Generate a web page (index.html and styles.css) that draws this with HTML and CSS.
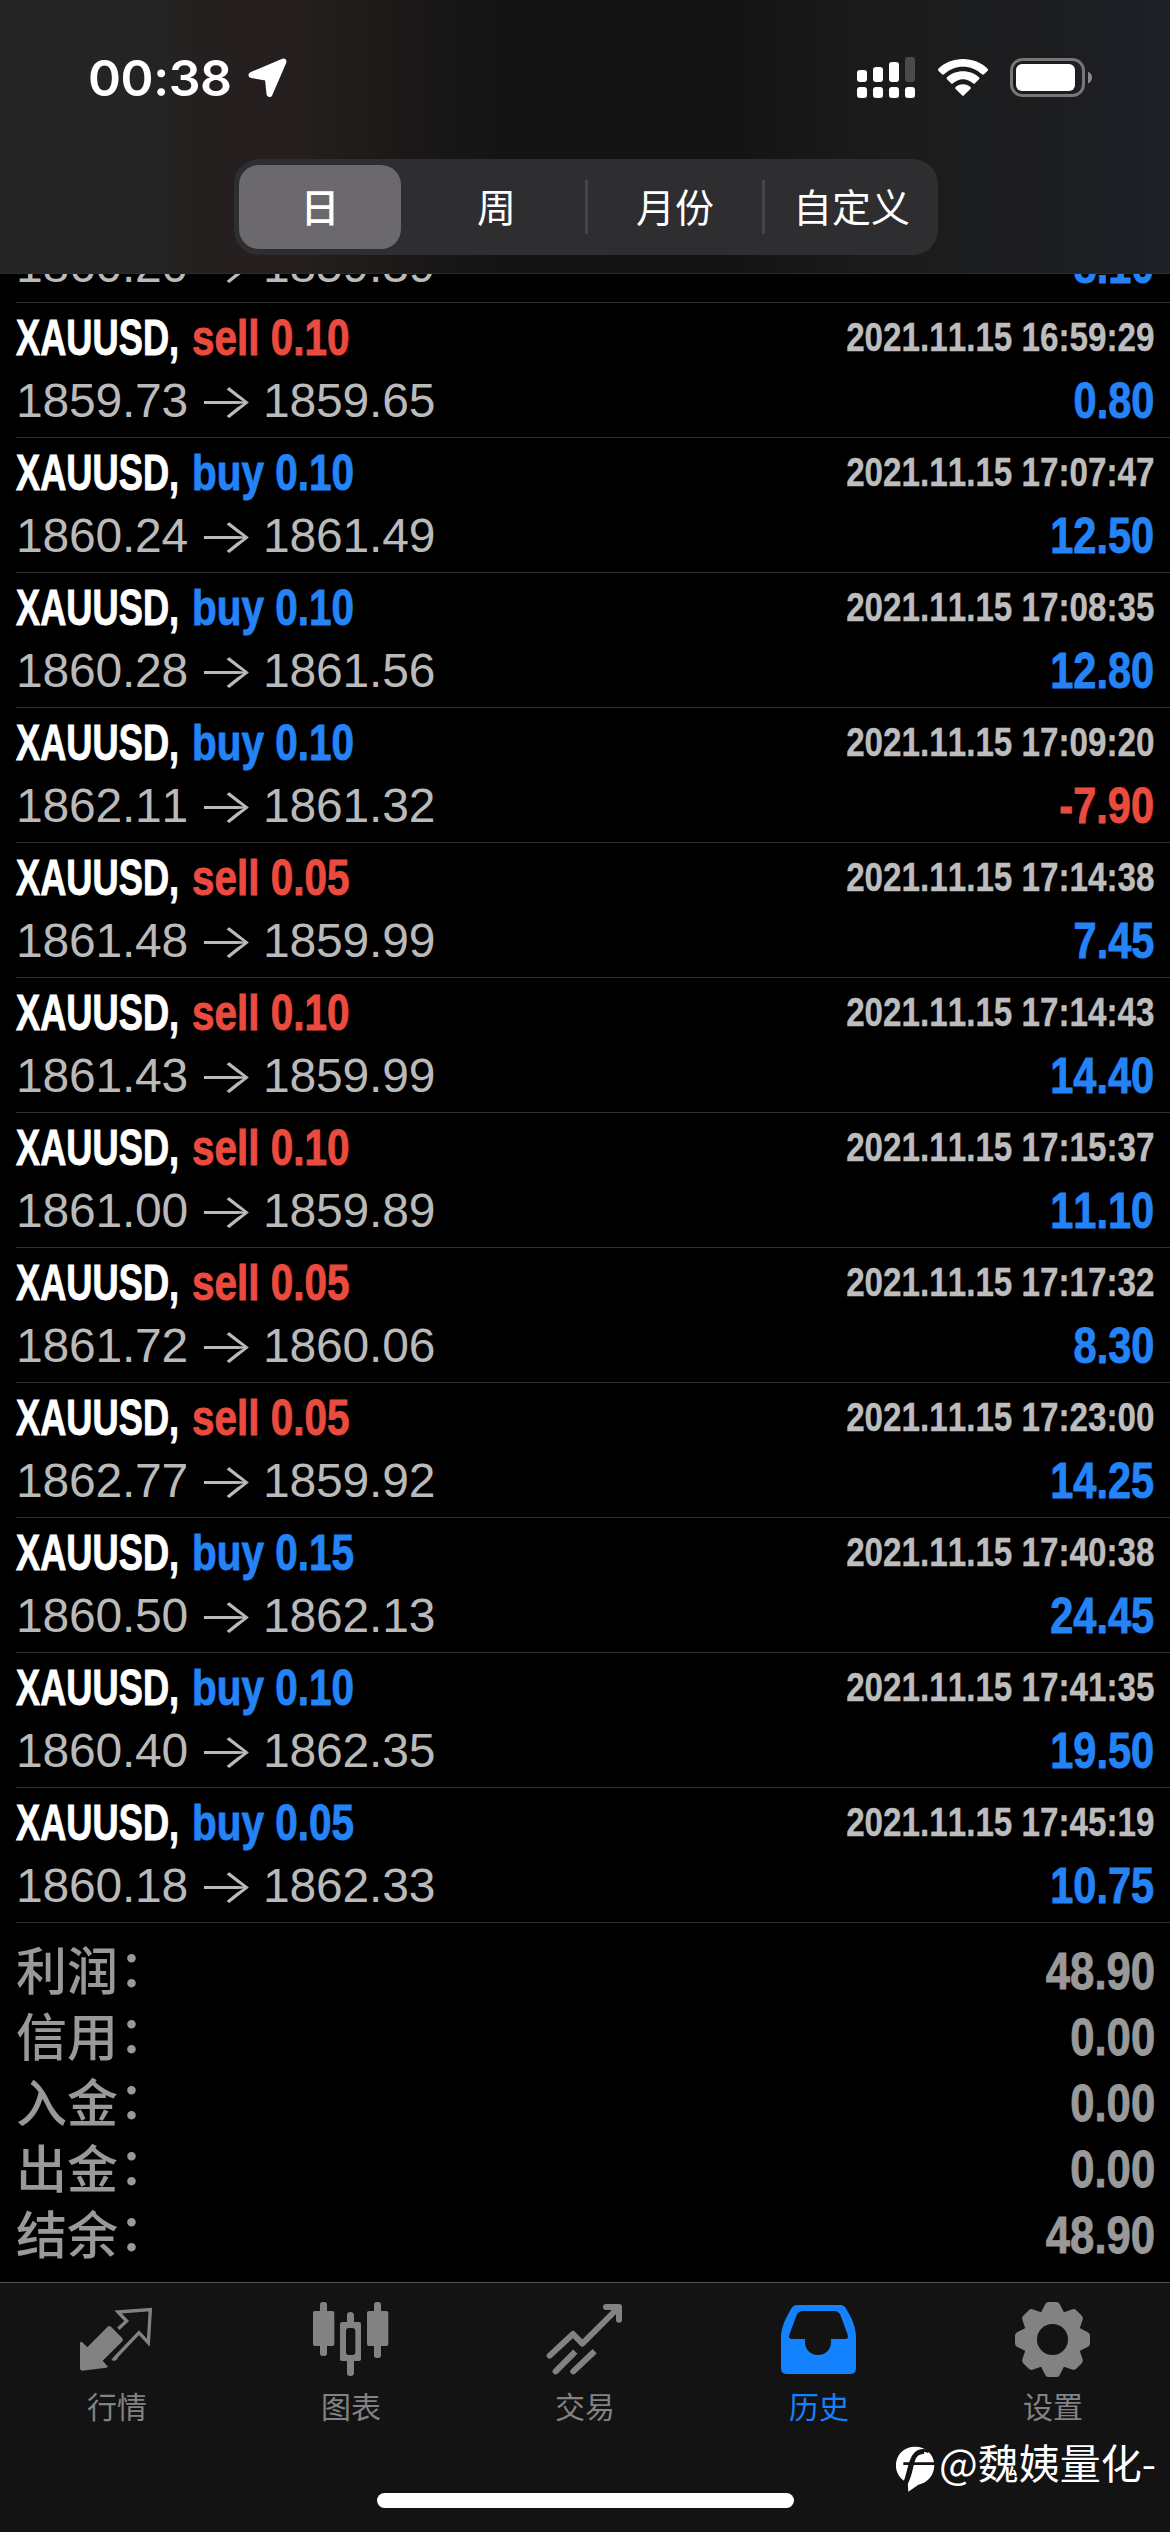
FILE: index.html
```html
<!DOCTYPE html>
<html lang="zh-CN">
<head>
<meta charset="utf-8">
<title>历史</title>
<link rel="stylesheet" href="styles.css">
</head>
<body>
<div class="screen">
  <header class="header">
    <div class="status">
      <div class="status-left">
        <span class="clock">00:38</span>
        <svg class="location" width="40" height="40" viewBox="0 0 40 40"><path d="M3.500 17 35.500 3.500 21.500 36 20 21 18 19.500Z" fill="#fff" stroke="#fff" stroke-width="6" stroke-linejoin="round"/></svg>
      </div>
      <div class="status-right">
        <svg width="58" height="41" viewBox="0 0 58 41" fill="#fff">
          <rect x="0" y="13" width="10" height="12" rx="3"/><rect x="16" y="10" width="10" height="15" rx="3"/><rect x="32" y="5" width="10" height="20" rx="3"/><rect x="48" y="0" width="10" height="25" rx="3" fill="#4a4a4a"/>
          <rect x="0" y="30" width="10" height="11" rx="3"/><rect x="16" y="30" width="10" height="11" rx="3"/><rect x="32" y="30" width="10" height="11" rx="3"/><rect x="48" y="30" width="10" height="11" rx="3"/>
        </svg>
        <svg class="wifi" width="50" height="37" viewBox="0 0 150 111" fill="#fff">
          <path d="M75 0C104 0 130 11 149 29Q151 32 149 35L138 46Q135 48 132 46C116 31 96 23 75 23S34 31 18 46Q15 48 12 46L1 35Q-1 32 1 29C20 11 46 0 75 0Z"/>
          <path d="M75 37C94 37 111 44 123 55Q126 58 123 61L111 73Q108 76 105 73C97 66 87 61 75 61S53 66 45 73Q42 76 39 73L27 61Q24 58 27 55C39 44 56 37 75 37Z"/>
          <path d="M75 76C84 76 91 79 97 84Q100 87 97 90L78 109Q75 112 72 109L53 90Q50 87 53 84C59 79 66 76 75 76Z"/>
        </svg>
        <svg class="battery" width="82" height="39" viewBox="0 0 82 39"><rect x="1.500" y="1.500" width="72" height="36" rx="11" fill="none" stroke="#777" stroke-width="3"/><rect x="6" y="6" width="59" height="27" rx="6" fill="#fff"/><path d="M78 13.500Q82 15.500 82 19.500T78 25.500Z" fill="#8a8a8a"/></svg>
      </div>
    </div>
    <nav class="segments">
      <span class="segment active">日</span>
      <span class="segment">周</span>
      <span class="segment divided">月份</span>
      <span class="segment divided">自定义</span>
    </nav>
  </header>
  <main class="history" id="history"></main>
  <section class="summary">
    <div class="total"><span class="label">利润<span class="colon">：</span></span><b>48.90</b></div>
    <div class="total"><span class="label">信用<span class="colon">：</span></span><b>0.00</b></div>
    <div class="total"><span class="label">入金<span class="colon">：</span></span><b>0.00</b></div>
    <div class="total"><span class="label">出金<span class="colon">：</span></span><b>0.00</b></div>
    <div class="total"><span class="label">结余<span class="colon">：</span></span><b>48.90</b></div>
  </section>
  <footer class="footer">
    <nav class="tabs">
      <div class="tab">
        <svg viewBox="54 90 234 234"><path d="M60 217 66 216 82 232 143 170Q148 166 153 170L187 205Q191 210 187 214L128 272 144 290 139 293 66 302 60 298Z" fill="currentColor"/><path d="M175 176 200 153 174 126 271 119 265 218 237 188 162 267" fill="none" stroke="currentColor" stroke-width="10"/><path d="M154 265H175L165 272H158Z" fill="currentColor"/></svg>
        <span>行情</span>
      </div>
      <div class="tab">
        <svg viewBox="756 90 234 234" fill="currentColor"><rect x="759" y="123" width="64" height="105" rx="6"/><rect x="780" y="96" width="21" height="162" rx="8"/><rect x="921" y="123" width="64" height="105" rx="6"/><rect x="942" y="96" width="21" height="168" rx="8"/><path fill-rule="evenodd" d="M861 156V136Q861 126 871 126T882 136V156H897Q903 156 903 162V267Q903 273 897 273H882V309Q882 318 871 318T861 309V273H846Q840 273 840 267V162Q840 156 846 156ZM866 174Q858 174 858 183V246Q858 255 866 255H877Q886 255 886 246V183Q886 174 877 174Z"/></svg>
        <span>图表</span>
      </div>
      <div class="tab">
        <svg viewBox="78 90 234 234" fill="none" stroke="currentColor" stroke-width="18" stroke-linecap="round" stroke-linejoin="round"><path d="M89 257 159 192 187 221 294 114M258 111H297V149"/><path d="M107 304 154 257M160 304 212 255"/><path d="M154 257 166 245M212 255 224 244" stroke-linecap="butt"/></svg>
        <span>交易</span>
      </div>
      <div class="tab active">
        <svg viewBox="780 90 234 234" fill="currentColor"><path fill-rule="evenodd" d="M832 105H961Q972 105 977 114C996 144 1008 172 1008 204V295Q1008 312 992 312H799Q783 312 783 295V204C783 172 797 144 815 114Q821 105 832 105ZM849 123Q835 123 829 137L808 194Q804 207 816 207H855V216C855 241 873 255 894 255S933 241 933 216V207H975Q987 207 983 194L962 137Q956 123 943 123Z"/></svg>
        <span>历史</span>
      </div>
      <div class="tab">
        <svg viewBox="0 0 78 78"><g transform="translate(38.500 39.500)" fill="currentColor"><g id="teeth"><path d="M-12-26-7.500-35Q-6.500-37.500-4-37.500H4Q6.500-37.500 7.500-35L12-26V26L7.500 35Q6.500 37.500 4 37.500H-4Q-6.500 37.500-7.500 35L-12 26Z"/></g><use href="#teeth" transform="rotate(45)"/><use href="#teeth" transform="rotate(90)"/><use href="#teeth" transform="rotate(135)"/><circle r="29"/><circle r="15.500" fill="#131313"/></g></svg>
        <span>设置</span>
      </div>
    </nav>
    <div class="home-bar"></div>
  </footer>
  <div class="watermark">
    <svg width="39" height="46" viewBox="0 0 117 138"><path d="M58 2A56 56 0 0 1 115 57C115 88 93 112 67 116L37 137 35 110A56 56 0 0 1 58 2Z" fill="#fff"/><path d="M24 112C37 95 38 32 65 17Q78 9 98 17M22 53H117" fill="none" stroke="#131313" stroke-width="8"/><path d="M28 115C42 91 44 65 51 43 57 24 66 19 84 17" fill="none" stroke="#131313" stroke-width="12"/></svg>
    <span>@魏姨量化-</span>
  </div>
</div>
<script src="history.js"></script>
</body>
</html>
```
FILE: styles.css
```css
* { box-sizing: border-box; }
body { margin: 0; background: #000; color: #fff; font-family: "Liberation Sans", "Noto Sans CJK SC", sans-serif; font-kerning: none; }
.screen { position: relative; width: 1170px; height: 2532px; overflow: hidden; display: flex; flex-direction: column; }
svg { display: block; flex: none; }

.header { height: 274px; flex: none; border-bottom: 1px solid #2b2b2b; background: linear-gradient(90deg, #252525 0, #242424 150px, #251f1f 210px, #241e1e 310px, #1b1918 400px, #141414 500px, #131313 720px, #1b1b1b 870px, #1c1d1f 1040px, #1c2028 1170px); }
.status { height: 159px; padding: 0 78px 0 88px; display: flex; justify-content: space-between; align-items: flex-start; }
.status-left { display: flex; padding-top: 48px; }
.clock { width: 160px; font: 600 50px/60px Inter, sans-serif; letter-spacing: -.4px; }
.location { margin-top: 10px; }
.status-right { display: flex; padding-top: 57px; }
.wifi { margin: 2px 22px 0 23px; }
.battery { margin-top: 1px; }

.segments { width: 704px; height: 96px; margin-left: 234px; border-radius: 25px; background: #2e2e31; display: grid; grid-template-columns: 174px 177px 177px 176px; }
.segment { display: flex; align-items: center; justify-content: center; padding-bottom: 4px; font: 400 39px/60px "Noto Sans CJK SC", sans-serif; }
.segment.active { margin: 6px 7px 6px 5px; border-radius: 20px; background: #6b696d; font-weight: 500; }
.divided { padding-left: 3px; background: linear-gradient(#464649, #464649) no-repeat left 21px / 3px 54px; }

.history { flex: none; }
.deal { height: 135px; margin-left: 16px; padding: 5px 16px 0 0; border-bottom: 1px solid #303030; display: flex; flex-direction: column; gap: 3px; }
.clipped { height: 29px; margin-left: 16px; overflow: hidden; display: flex; flex-direction: column; justify-content: flex-end; border-bottom: 1px solid #303030; }
.clipped .deal { flex: none; margin-left: 0; height: 134px; border: 0; }
.line { height: 60px; line-height: 60px; display: flex; justify-content: space-between; white-space: nowrap; }
.title { display: flex; font-size: 50px; font-weight: 700; -webkit-text-stroke: .9px; }
.symbol { width: 176px; transform: scaleX(.725); transform-origin: left; }
.side { transform: scaleX(.81); transform-origin: left; }
.date { font-size: 40px; font-weight: 700; color: #bdbdbd; line-height: 58px; transform: scaleX(.83); transform-origin: right; -webkit-text-stroke: .4px; }
.prices { display: flex; font-size: 48px; color: #bababa; letter-spacing: -.2px; }
.arrow { width: 75px; text-align: center; font: 300 48px/60px Inter, sans-serif; transform: scaleX(1.28); }
.profit { font-size: 50px; font-weight: 700; transform: scaleX(.83); transform-origin: right; -webkit-text-stroke: .9px; }
.buy, .gain { color: #2483f7; }
.sell, .loss { color: #eb4b3e; }

.summary { flex: none; padding: 15px 15px 0 16px; height: 359px; color: #999; }
.total { height: 66px; display: flex; justify-content: space-between; align-items: center; font: 500 51px/66px "Noto Sans CJK SC", sans-serif; }
.label { height: 66px; margin-top: -6px; }
.colon { display: inline-block; width: 24px; text-indent: -12px; height: 66px; vertical-align: top; line-height: 66px; font-family: "Noto Sans CJK TC", sans-serif; }
.total b { font: 700 52px/66px "Liberation Sans", sans-serif; transform: scaleX(.84); transform-origin: right; -webkit-text-stroke: .9px; }

.footer { height: 250px; flex: none; border-top: 1px solid #545454; background: #131313; }
.tabs { display: grid; grid-template-columns: repeat(5, 1fr); padding-top: 17px; height: 210px; align-items: start; }
.tab { display: flex; flex-direction: column; align-items: center; color: #828282; font: 400 30px/40px "Noto Sans CJK SC", sans-serif; }
.tab svg { width: 78px; height: 78px; margin-bottom: 7px; }
.tab.active { color: #1482fe; }
.home-bar { width: 417px; height: 15px; margin: 0 auto; border-radius: 8px; background: #fff; }

.watermark { position: absolute; left: 896px; top: 2431px; display: flex; gap: 4px; font: 400 41px/60px "Noto Sans CJK SC", sans-serif; white-space: nowrap; }
.watermark svg { margin-top: 15px; }
```
FILE: history.js
```js
const deals = [
  ['sell 0.10', '2021.11.15 16:59:29', '1859.73', '1859.65', '0.80'],
  ['buy 0.10', '2021.11.15 17:07:47', '1860.24', '1861.49', '12.50'],
  ['buy 0.10', '2021.11.15 17:08:35', '1860.28', '1861.56', '12.80'],
  ['buy 0.10', '2021.11.15 17:09:20', '1862.11', '1861.32', '-7.90'],
  ['sell 0.05', '2021.11.15 17:14:38', '1861.48', '1859.99', '7.45'],
  ['sell 0.10', '2021.11.15 17:14:43', '1861.43', '1859.99', '14.40'],
  ['sell 0.10', '2021.11.15 17:15:37', '1861.00', '1859.89', '11.10'],
  ['sell 0.05', '2021.11.15 17:17:32', '1861.72', '1860.06', '8.30'],
  ['sell 0.05', '2021.11.15 17:23:00', '1862.77', '1859.92', '14.25'],
  ['buy 0.15', '2021.11.15 17:40:38', '1860.50', '1862.13', '24.45'],
  ['buy 0.10', '2021.11.15 17:41:35', '1860.40', '1862.35', '19.50'],
  ['buy 0.05', '2021.11.15 17:45:19', '1860.18', '1862.33', '10.75']
];

const priceLine = (from, to, profit) => `
  <div class="line">
    <div class="prices"><span>${from}</span><span class="arrow">→</span><span>${to}</span></div>
    <span class="profit ${profit.startsWith('-') ? 'loss' : 'gain'}">${profit}</span>
  </div>`;

const row = ([side, date, from, to, profit]) => `
  <div class="deal">
    <div class="line">
      <div class="title"><span class="symbol">XAUUSD,</span><span class="side ${side.split(' ')[0]}">${side}</span></div>
      <span class="date">${date}</span>
    </div>${priceLine(from, to, profit)}
  </div>`;

// The deal scrolled under the header shows only the foot of its price line.
const clipped = `<div class="clipped"><div class="deal"><div class="line"></div>${priceLine('1860.20', '1859.39', '8.10')}</div></div>`;

document.getElementById('history').innerHTML = clipped + deals.map(row).join('');
```
